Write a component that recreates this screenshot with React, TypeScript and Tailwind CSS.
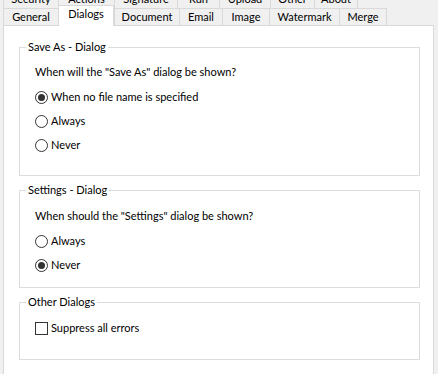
import React from "react";

const topTabs = [
  {label: "Security", w: "w-[55px]"},
  {label: "Actions", w: "w-[56px]"},
  {label: "Signature", w: "w-[63px]"},
  {label: "Run", w: "w-[42px]"},
  {label: "Upload", w: "w-[51px]"},
  {label: "Other", w: "w-[44px]"},
  {label: "About", w: "w-[44px]"},
];

const tabs = [
  {label: "General", w: "w-[55px]"},
  {label: "Dialogs", w: "w-[56px]"},
  {label: "Document", w: "w-[65px]"},
  {label: "Email", w: "w-[43px]"},
  {label: "Image", w: "w-[47px]"},
  {label: "Watermark", w: "w-[70px]"},
  {label: "Merge", w: "w-[48px]"},
];

const Radio = ({checked, label}: {checked?: boolean; label: string}) => (
  <div className="flex h-[24px] items-center gap-[3px]">
    <span className="flex h-[13px] w-[13px] items-center justify-center rounded-full border border-[#333333] bg-white">
      {checked && <span className="h-[7px] w-[7px] rounded-full bg-[#333333]" />}
    </span>
    <span>{label}</span>
  </div>
);

const Group = ({title, className, children}: {title: string; className: string; children: React.ReactNode}) => (
  <fieldset className={`w-[401px] border border-[#dcdcdc] px-[15px] ${className}`}>
    <legend className="-ml-[9px] px-[2px] leading-[14px]">{title}</legend>
    {children}
  </fieldset>
);

const App = () => {
  const [active, setActive] = React.useState("Dialogs");
  const [saveAs, setSaveAs] = React.useState("none");
  const [settings, setSettings] = React.useState("never");

  return (
    <div className="h-[374px] w-[438px] overflow-hidden bg-[#f0f0f0] font-['Lato',sans-serif] text-[11px] text-black">
      <div className="-mt-[11px] flex h-[19px] pl-[3px]">
        {topTabs.map((t, i) => (
          <div
            key={t.label}
            className={`${t.w} flex items-center justify-center border-t border-l border-[#d9d9d9] ${i === topTabs.length - 1 ? "border-r" : ""}`}
          >
            {t.label}
          </div>
        ))}
      </div>
      <div className="flex h-[17px] items-end pl-[3px]">
        {tabs.map((t, i) =>
          t.label === active ? (
            <div
              key={t.label}
              className={`${t.w} relative z-10 -mb-px flex h-[21px] items-center justify-center border-x border-t border-[#d9d9d9] bg-white pb-[3px]`}
            >
              {t.label}
            </div>
          ) : (
            <div
              key={t.label}
              onClick={() => setActive(t.label)}
              className={`${t.w} flex h-[17px] items-center justify-center border-t border-l border-[#d9d9d9] ${i === tabs.length - 1 ? "border-r" : ""}`}
            >
              {t.label}
            </div>
          )
        )}
      </div>
      <div className="ml-[3px] h-[360px] w-[431px] border border-[#d9d9d9] bg-white pl-[15px] pt-[14px]">
        <Group title="Save As - Dialog" className="h-[136px]">
          <div className="box-content flex h-[24px] items-center pt-[6px]">When will the "Save As" dialog be shown?</div>
          <div className="mt-px" onClick={() => setSaveAs("none")}>
            <Radio checked={saveAs === "none"} label="When no file name is specified" />
          </div>
          <div onClick={() => setSaveAs("always")}>
            <Radio checked={saveAs === "always"} label="Always" />
          </div>
          <div onClick={() => setSaveAs("never")}>
            <Radio checked={saveAs === "never"} label="Never" />
          </div>
        </Group>
        <Group title="Settings - Dialog" className="mt-[7px] h-[105px]">
          <div className="box-content flex h-[24px] items-center pt-[7px]">When should the "Settings" dialog be shown?</div>
          <div className="mt-px" onClick={() => setSettings("always")}>
            <Radio checked={settings === "always"} label="Always" />
          </div>
          <div onClick={() => setSettings("never")}>
            <Radio checked={settings === "never"} label="Never" />
          </div>
        </Group>
        <Group title="Other Dialogs" className="mt-[7px] h-[65px]">
          <div className="mt-[7px] flex h-[24px] items-center gap-[3px]">
            <span className="h-[13px] w-[13px] border border-[#333333] bg-white" />
            <span>Suppress all errors</span>
          </div>
        </Group>
      </div>
    </div>
  );
};

export default App;
